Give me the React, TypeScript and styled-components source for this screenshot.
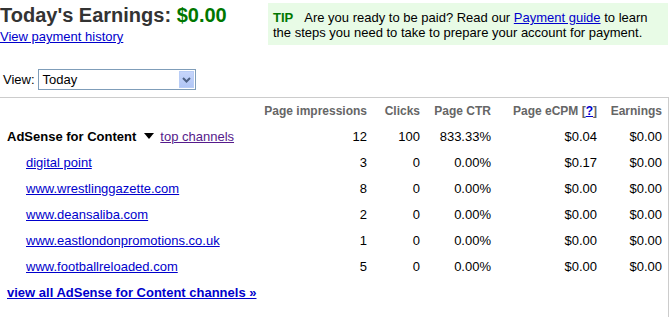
import * as React from 'react'
import styled, { createGlobalStyle } from 'styled-components'

const GlobalStyle = createGlobalStyle`
  body {
    margin: 0;
    background: #fff;
    font-family: "Liberation Sans", Arial, sans-serif;
    font-size: 13px;
    color: #000;
  }
  a {
    color: #0000cc;
  }
`

const Page = styled.div`
  width: 672px;
  height: 317px;
  overflow: hidden;
`

const TopArea = styled.div`
  display: flex;
  justify-content: space-between;
  align-items: flex-start;
`

const TitleBlock = styled.div`
  padding-top: 1px;
`

const Title = styled.h1`
  margin: 0;
  font-size: 20px;
  line-height: 28px;
  font-weight: bold;
  color: #333;
`

const Amount = styled.span`
  color: #007700;
`

const SmallLink = styled.a`
  display: block;
  font-size: 13px;
  line-height: 15px;
`

const TipBox = styled.div`
  margin: 3px 4px 0 0;
  width: 400px;
  height: 42px;
  box-sizing: border-box;
  padding: 7px 0 0 5px;
  background: #e8fbe6;
  line-height: 15px;
  color: #000;
`

const TipLabel = styled.b`
  color: #007700;
  margin-right: 11px;
`

const ViewRow = styled.div`
  display: flex;
  align-items: center;
  gap: 3px;
  margin: 24px 0 7px 3px;
`

const SelectBox = styled.div`
  display: flex;
  align-items: center;
  width: 156px;
  height: 19px;
  border: 1px solid #7f9db9;
  background: #fff;
`

const SelectText = styled.span`
  flex: 1;
  padding-left: 4px;
`

const SelectArrow = styled.span`
  display: flex;
  align-items: center;
  justify-content: center;
  width: 15px;
  height: 17px;
  margin-right: 1px;
  background: linear-gradient(#c6d5fb, #b1c6f6);
  border: 1px solid #b9cdf6;
  box-sizing: border-box;
`

const TableWrap = styled.div`
  width: 662px;
  padding-right: 6px;
  border-top: 1px solid #cccccc;
  border-right: 1px solid #cccccc;
  height: 232px;
`

const Table = styled.table`
  border-collapse: collapse;
  table-layout: fixed;
  width: 662px;
`

const HeadCell = styled.th`
  height: 25px;
  padding: 0;
  text-align: right;
  font-size: 12px;
  font-weight: bold;
  color: #666;
  white-space: nowrap;
`

const Cell = styled.td<{ $indent?: number }>`
  height: 26px;
  padding: 0 0 0 ${p => p.$indent ?? 0}px;
  text-align: ${p => (p.$indent !== undefined ? 'left' : 'right')};
  white-space: nowrap;
`

const SectionName = styled.b`
  margin-right: 8px;
`

const Caret = styled.span`
  display: inline-block;
  width: 0;
  height: 0;
  border-left: 5px solid transparent;
  border-right: 5px solid transparent;
  border-top: 6px solid #000;
  margin-right: 6px;
  vertical-align: 2px;
`

const VisitedLink = styled.a`
  color: #551a8b;
`

const BoldLink = styled.a`
  font-weight: bold;
`

const channels = [
  { name: 'digital point', imp: 3, clicks: 0, ctr: '0.00%', ecpm: '$0.17', earn: '$0.00' },
  { name: 'www.wrestlinggazette.com', imp: 8, clicks: 0, ctr: '0.00%', ecpm: '$0.00', earn: '$0.00' },
  { name: 'www.deansaliba.com', imp: 2, clicks: 0, ctr: '0.00%', ecpm: '$0.00', earn: '$0.00' },
  { name: 'www.eastlondonpromotions.co.uk', imp: 1, clicks: 0, ctr: '0.00%', ecpm: '$0.00', earn: '$0.00' },
  { name: 'www.footballreloaded.com', imp: 5, clicks: 0, ctr: '0.00%', ecpm: '$0.00', earn: '$0.00' },
]

export default function App() {
  return (
    <Page>
      <GlobalStyle />
      <TopArea>
        <TitleBlock>
          <Title>
            Today's Earnings: <Amount>$0.00</Amount>
          </Title>
          <SmallLink href="#">View payment history</SmallLink>
        </TitleBlock>
        <TipBox>
          <TipLabel>TIP</TipLabel>
          Are you ready to be paid? Read our <a href="#">Payment guide</a> to learn
          the steps you need to take to prepare your account for payment.
        </TipBox>
      </TopArea>

      <ViewRow>
        <span>View:</span>
        <SelectBox>
          <SelectText>Today</SelectText>
          <SelectArrow>
            <svg width="9" height="6" viewBox="0 0 9 6">
              <path d="M1 1 L4.5 4.5 L8 1" fill="none" stroke="#4d6185" strokeWidth="2" />
            </svg>
          </SelectArrow>
        </SelectBox>
      </ViewRow>

      <TableWrap>
        <Table>
          <colgroup>
            <col style={{ width: 250 }} />
            <col style={{ width: 117 }} />
            <col style={{ width: 53 }} />
            <col style={{ width: 71 }} />
            <col style={{ width: 106 }} />
            <col style={{ width: 65 }} />
          </colgroup>
          <thead>
            <tr>
              <HeadCell />
              <HeadCell>Page impressions</HeadCell>
              <HeadCell>Clicks</HeadCell>
              <HeadCell>Page CTR</HeadCell>
              <HeadCell>
                Page eCPM [<a href="#">?</a>]
              </HeadCell>
              <HeadCell>Earnings</HeadCell>
            </tr>
          </thead>
          <tbody>
            <tr>
              <Cell $indent={7}>
                <SectionName>AdSense for Content</SectionName>
                <Caret />
                <VisitedLink href="#">top channels</VisitedLink>
              </Cell>
              <Cell>12</Cell>
              <Cell>100</Cell>
              <Cell>833.33%</Cell>
              <Cell>$0.04</Cell>
              <Cell>$0.00</Cell>
            </tr>
            {channels.map(c => (
              <tr key={c.name}>
                <Cell $indent={26}>
                  <a href="#">{c.name}</a>
                </Cell>
                <Cell>{c.imp}</Cell>
                <Cell>{c.clicks}</Cell>
                <Cell>{c.ctr}</Cell>
                <Cell>{c.ecpm}</Cell>
                <Cell>{c.earn}</Cell>
              </tr>
            ))}
            <tr>
              <Cell $indent={7} colSpan={6}>
                <BoldLink href="#">view all AdSense for Content channels »</BoldLink>
              </Cell>
            </tr>
          </tbody>
        </Table>
      </TableWrap>
    </Page>
  )
}
